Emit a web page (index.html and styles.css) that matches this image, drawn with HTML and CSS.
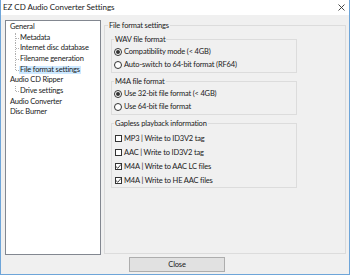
FILE: index.html
```html
<!DOCTYPE html>
<html>
<head>
<meta charset="utf-8">
<link rel="stylesheet" href="styles.css">
</head>
<body>
<div class="window">
  <div class="titlebar">
    <span class="title">EZ CD Audio Converter Settings</span>
    <svg class="close-x" width="7" height="7" viewBox="0 0 7 7"><path d="M0.5 0.5 L6.5 6.5 M6.5 0.5 L0.5 6.5" stroke="#333" stroke-width="0.9" fill="none"/></svg>
  </div>
  <div class="body">
    <div class="main">
      <div class="tree">
        <div class="node root"><span class="lbl">General</span></div>
        <div class="node child"><span class="lbl">Metadata</span></div>
        <div class="node child"><span class="lbl">Internet disc database</span></div>
        <div class="node child"><span class="lbl">Filename generation</span></div>
        <div class="node child last"><span class="lbl selected">File format settings</span></div>
        <div class="node root"><span class="lbl">Audio CD Ripper</span></div>
        <div class="node child last"><span class="lbl">Drive settings</span></div>
        <div class="node root"><span class="lbl">Audio Converter</span></div>
        <div class="node root"><span class="lbl">Disc Burner</span></div>
      </div>
      <fieldset class="outer">
        <legend>File format settings</legend>
        <fieldset class="group radios">
          <legend>WAV file format</legend>
          <div class="opt"><span class="radio on"></span>Compatibility mode (&lt; 4GB)</div>
          <div class="opt"><span class="radio"></span>Auto-switch to 64-bit format (RF64)</div>
        </fieldset>
        <fieldset class="group radios">
          <legend>M4A file format</legend>
          <div class="opt"><span class="radio on"></span>Use 32-bit file format (&lt; 4GB)</div>
          <div class="opt"><span class="radio"></span>Use 64-bit file format</div>
        </fieldset>
        <fieldset class="group checks">
          <legend>Gapless playback information</legend>
          <div class="chk"><span class="box"></span>MP3 | Write to ID3V2 tag</div>
          <div class="chk"><span class="box"></span>AAC | Write to ID3V2 tag</div>
          <div class="chk"><span class="box on"><svg width="7" height="7" viewBox="0 0 7 7"><path d="M1 3.6 L2.8 5.3 L6 1.4" stroke="#333" stroke-width="0.9" fill="none"/></svg></span>M4A | Write to AAC LC files</div>
          <div class="chk"><span class="box on"><svg width="7" height="7" viewBox="0 0 7 7"><path d="M1 3.6 L2.8 5.3 L6 1.4" stroke="#333" stroke-width="0.9" fill="none"/></svg></span>M4A | Write to HE AAC files</div>
        </fieldset>
      </fieldset>
    </div>
    <div class="buttons">
      <button class="btn">Close</button>
    </div>
  </div>
</div>
</body>
</html>
```
FILE: styles.css
```css
* { box-sizing: border-box; }
html, body { margin: 0; padding: 0; }
body {
  font-family: "Lato", "Noto Sans", sans-serif;
  font-size: 7.5px;
  letter-spacing: -0.17px;
  color: #1a1a1a;
  background: #fff;
}
.window {
  width: 350px;
  height: 275px;
  border: 1px solid #6ea5d9;
  border-top: none;
  display: flex;
  flex-direction: column;
}
.titlebar {
  height: 15px;
  background: #fff;
  display: flex;
  align-items: center;
  justify-content: space-between;
  padding: 0 4px 1px 2px;
  font-size: 8px;
  letter-spacing: -0.05px;
  line-height: 11px;
}
.close-x { display: block; }
.body {
  flex: 1;
  background: #f0f0f0;
  padding: 5px 3px 2px 4px;
  display: flex;
  flex-direction: column;
}
.main {
  display: flex;
  gap: 3px;
  height: 235px;
}
.tree {
  width: 96px;
  height: 235px;
  background: #fff;
  border: 1px solid #828790;
  padding-top: 1px;
}
.node {
  height: 10.67px;
  line-height: 10.67px;
  position: relative;
  white-space: nowrap;
}
.node.root { padding-left: 3px; }
.node.child { padding-left: 13px; }
.node.child::before {
  content: "";
  position: absolute;
  left: 9px;
  top: 0;
  height: 100%;
  border-left: 1px dotted #b0b0b0;
}
.node.child.last::before { height: 50%; }
.node.child::after {
  content: "";
  position: absolute;
  left: 10px;
  top: 5px;
  width: 3px;
  border-top: 1px dotted #b0b0b0;
}
.lbl { padding: 0 1px; display: inline-block; line-height: 8px; }
.lbl.selected { background: #cce8ff; }
fieldset {
  margin: 0;
  border: 1px solid #dcdcdc;
  min-width: 0;
}
legend {
  line-height: 11px;
  padding: 0 1px;
}
.outer {
  flex: 1;
  height: 234px;
  padding: 0 6px;
}
.outer > legend { margin-left: -3px; }
.group {
  width: 186px;
  padding: 0;
  margin-top: 3px;
}
.group > legend { margin-left: 2px; }
.radios { padding-bottom: 1px; }
.checks { padding: 2px 0 0 0; }
.opt {
  height: 13px;
  display: flex;
  align-items: center;
  gap: 2px;
  padding-left: 2px;
  white-space: nowrap;
}
.radio {
  width: 8px;
  height: 8px;
  border: 1px solid #333;
  border-radius: 50%;
  background: #fff;
  display: flex;
  align-items: center;
  justify-content: center;
  flex: none;
}
.radio.on::after {
  content: "";
  width: 4px;
  height: 4px;
  border-radius: 50%;
  background: #333;
}
.chk {
  height: 14px;
  display: flex;
  align-items: center;
  gap: 2px;
  padding-left: 3px;
  white-space: nowrap;
}
.box {
  width: 7px;
  height: 7px;
  border: 1px solid #333;
  background: #fff;
  flex: none;
  position: relative;
}
.box svg { position: absolute; left: -1px; top: -1px; }
.buttons {
  margin-top: 2px;
  height: 15px;
  padding-left: 124px;
}
.btn {
  width: 96px;
  height: 15px;
  background: #e1e1e1;
  border: 1px solid #adadad;
  font-family: inherit;
  font-size: 7.5px;
  letter-spacing: -0.17px;
  padding: 0;
  color: #1a1a1a;
  line-height: 13px;
}
```
